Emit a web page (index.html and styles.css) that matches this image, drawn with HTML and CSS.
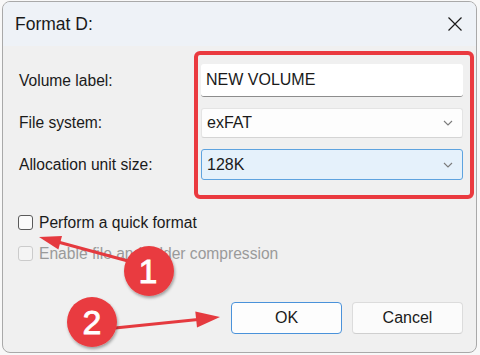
FILE: index.html
```html
<!DOCTYPE html>
<html lang="en">
<head>
    <meta charset="UTF-8">
    <title>Format D:</title>
    <link rel="stylesheet" href="styles.css">
</head>
<body>
    <!-- Dialog window -->
    <div class="window">
        <div class="titlebar">
            <span class="title">Format D:</span>
            <svg class="close" width="14" height="14" viewBox="0 0 14 14">
                <path d="M0.5 0.5 L13.5 13.5 M13.5 0.5 L0.5 13.5" stroke="#1b1b1b" stroke-width="1.2" fill="none"/>
            </svg>
        </div>

        <div class="content">
            <div class="fields">
                <label>Volume label:</label>
                <div class="input">NEW VOLUME</div>

                <label>File system:</label>
                <div class="select">
                    <span>exFAT</span>
                    <svg class="chevron" width="10" height="6" viewBox="0 0 10 6"><path d="M1 1 L5 5 L9 1" stroke="#7c7c7c" stroke-width="1.1" fill="none"/></svg>
                </div>

                <label>Allocation unit size:</label>
                <div class="select focused">
                    <span>128K</span>
                    <svg class="chevron" width="10" height="6" viewBox="0 0 10 6"><path d="M1 1 L5 5 L9 1" stroke="#7c7c7c" stroke-width="1.1" fill="none"/></svg>
                </div>
            </div>

            <div class="checks">
                <div class="check"><span class="box"></span>Perform a quick format</div>
                <div class="check disabled"><span class="box"></span>Enable file and folder compression</div>
            </div>

            <div class="buttons">
                <button class="btn primary">OK</button>
                <button class="btn">Cancel</button>
            </div>
        </div>
    </div>

    <!-- Annotations drawn over the dialog -->
    <svg class="annotations" width="480" height="355" viewBox="0 0 480 355">
        <defs>
            <filter id="shadow" x="-30%" y="-30%" width="160%" height="160%">
                <feDropShadow dx="1" dy="2" stdDeviation="1.5" flood-color="#000" flood-opacity="0.35"/>
            </filter>
        </defs>
        <rect x="196" y="53" width="276" height="144" rx="4" fill="none" stroke="#ea3a3f" stroke-width="4"/>

        <line x1="128" y1="261" x2="58" y2="242" stroke="#e53a3f" stroke-width="3"/>
        <polygon points="39,237 62,236 58.4,249.5" fill="#e53a3f"/>

        <line x1="115" y1="328" x2="198" y2="319.5" stroke="#e53a3f" stroke-width="3"/>
        <polygon points="220,317 195.3,311.6 197,327.5" fill="#e53a3f"/>

        <g filter="url(#shadow)">
            <circle cx="149" cy="271" r="25" fill="#e93b3f"/>
            <circle cx="92" cy="322" r="25" fill="#e93b3f"/>
        </g>
        <text class="num" x="148" y="283">1</text>
        <text class="num" x="92" y="334">2</text>
    </svg>
</body>
</html>
```

FILE: styles.css
```css
/* Reset */
* {
    margin: 0;
    padding: 0;
    box-sizing: border-box;
}

body {
    font-family: 'Liberation Sans', Arial, sans-serif;
    background-color: #f8f8f8;
    color: #1a1a1a;
}

/* Window */
.window {
    margin: 1px 0 0 2px;
    width: 475px;
    height: 352px;
    border: 1px solid #a9a9a9;
    border-radius: 8px;
    overflow: hidden;
    background-color: #f0f0f0;
}

.titlebar {
    height: 44px;
    background-color: #eef2f7;
    display: flex;
    align-items: center;
    justify-content: space-between;
    padding: 0 14px 0 12px;
}

.title {
    font-size: 17.5px;
    color: #1a1a1a;
}

/* Content */
.content {
    padding: 18px 13px 0 16px;
}

.fields {
    display: grid;
    grid-template-columns: 182px 1fr;
    row-gap: 11px;
}

.fields label {
    align-self: center;
    font-size: 15.6px;
}

.input {
    height: 33px;
    background: #fff;
    border-bottom: 1px solid #8d8d8d;
    border-radius: 3px;
    padding: 0 5px;
    display: flex;
    align-items: center;
    font-size: 16px;
}

.select {
    height: 30px;
    background: #fdfdfd;
    border: 1px solid #e4e4e4;
    border-bottom-color: #d4d4d4;
    border-radius: 3px;
    padding: 0 9px 0 5px;
    display: flex;
    align-items: center;
    justify-content: space-between;
    font-size: 16px;
}

.select.focused {
    height: 31px;
    background: #e5f1fb;
    border: 1px solid #5ea3df;
}

/* Checkboxes */
.checks {
    margin-top: 27px;
}

.check {
    height: 31px;
    display: flex;
    align-items: center;
    font-size: 15.6px;
}

.check .box {
    width: 15px;
    height: 15px;
    margin-left: -1px;
    margin-right: 6px;
    border: 1px solid #5a5a5a;
    border-radius: 3px;
    background: #fafafa;
}

.check.disabled {
    color: #9a9a9a;
}

.check.disabled .box {
    border-color: #cbcbcb;
    background: #f4f4f4;
}

/* Buttons */
.buttons {
    margin-top: 33px;
    display: flex;
    justify-content: flex-end;
    gap: 10px;
}

.btn {
    width: 111px;
    height: 32px;
    font-family: inherit;
    font-size: 16px;
    color: #1a1a1a;
    background: #fbfbfb;
    border: 1px solid #dcdcdc;
    border-bottom-color: #cfcfcf;
    border-radius: 4px;
}

.btn.primary {
    background: #fdfdfd;
    border: 1px solid #4a92da;
}

/* Annotations */
.annotations {
    position: absolute;
    top: 0;
    left: 0;
    pointer-events: none;
}

.num {
    font-family: 'Liberation Sans', Arial, sans-serif;
    font-size: 34px;
    fill: #fff;
    stroke: #fff;
    stroke-width: 0.8;
    text-anchor: middle;
}
```
